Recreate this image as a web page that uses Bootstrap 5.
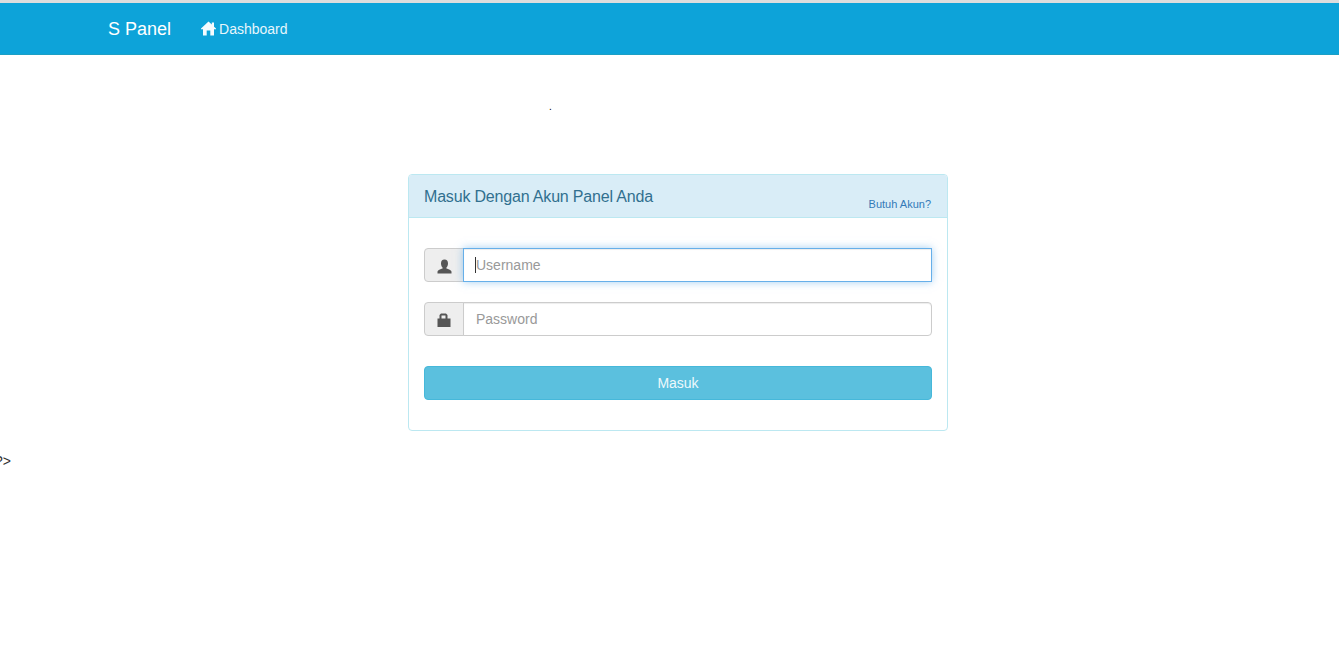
<!DOCTYPE html>
<html>
<head>
<meta name="viewport" content="width=device-width, initial-scale=1">
<link href="https://cdn.jsdelivr.net/npm/bootstrap@5.3.0/dist/css/bootstrap.min.css" rel="stylesheet">
<script src="https://cdn.jsdelivr.net/npm/bootstrap@5.3.0/dist/js/bootstrap.bundle.min.js"></script>
<style>
body {font-family: "Liberation Sans", Arial, sans-serif; font-size: 14px; color: #333; background: #fff; line-height: 20px;}

/* top bar */
.top-bar {background: #0da3d9; border-top: 3px solid #ddd; border-bottom: 1px solid #1c9fc4; height: 55px; padding: 0 0 0 108px; justify-content: flex-start;}
.top-bar .navbar-brand {color: #fff; font-size: 18px; line-height: 20px; padding: 0; margin: 0 22px 0 0;}
.top-bar .nav-link {color: #e6f6fc; font-size: 14px; line-height: 20px; padding: 0; display: flex; align-items: center; gap: 3px;}
.top-bar .nav-link svg {width: 15px; height: 15px; fill: #f4fbfe;}

/* stray output of the page */
.stray-dot {padding: 42px 0 0 549px; height: 119px; font-size: 10px; line-height: 20px; color: #000;}
.stray-end {margin: 20px 0 0 -5px; color: #333; white-space: nowrap;}

/* login panel */
.login-panel {width: 540px; margin-left: 408px; height: 257px; border: 1px solid #bce8f1; border-radius: 4px; --bs-card-bg: #fff;}
.login-panel .card-header {background: #d9edf7; border-bottom: 1px solid #bce8f1; color: #31708f; height: 43px; padding: 0 16px 0 15px; display: flex; justify-content: space-between; border-radius: 3px 3px 0 0;}
.panel-heading-text {font-size: 16px; line-height: 18px; margin-top: 13px; letter-spacing: -.18px;}
.panel-link {font-size: 11px; color: #337ab7; text-decoration: none; line-height: 14px; margin-top: 22px;}
.login-panel .card-body {padding: 30px 15px 0;}
.login-panel .input-group {height: 34px; margin-bottom: 20px;}
.login-panel .input-group-text {width: 40px; justify-content: center; padding: 0; background: #eee; border-color: #ccc; border-radius: 4px 0 0 4px;}
.login-panel .input-group-text svg {width: 15px; height: 15px; fill: #555; overflow: visible;}
.login-panel .form-control {font-size: 14px; color: #555; padding: 6px 12px; height: 34px; border-color: #ccc; border-radius: 0 4px 4px 0; box-shadow: inset 0 1px 1px rgba(0,0,0,.075);}
.login-panel .form-control::placeholder {color: #999;}
.login-panel .form-control:focus {border-color: #66afe9; box-shadow: inset 0 1px 1px rgba(0,0,0,.075), 0 0 8px rgba(102,175,233,.6); caret-color: transparent;}
/* the text cursor sitting in the focused field */
.field-caret {position: absolute; left: 52px; top: 9px; width: 1px; height: 16px; background: #333; z-index: 6;}
.masuk-btn {display: block; width: 100%; height: 34px; margin-top: 30px; padding: 0; font-size: 14px; line-height: 32px; color: #eef9fc; background: #5bc0de; border: 1px solid #46b8da; border-radius: 4px;}
</style>
</head>
<body>

<nav class="navbar navbar-expand top-bar">
  <a class="navbar-brand" href="#">S Panel</a>
  <ul class="navbar-nav">
    <li class="nav-item">
      <a class="nav-link" href="#">
        <svg viewBox="0 0 15 15"><path d="M7.5 .5 L10.8 3.6 L10.8 1.5 L13 1.5 L13 5.7 L15 7.6 L15 8.2 L13 8.2 L13 14.5 L9.3 14.5 L9.3 9.6 L5.7 9.6 L5.7 14.5 L2 14.5 L2 8.2 L0 8.2 L0 7.6 Z"/></svg>
        Dashboard
      </a>
    </li>
  </ul>
</nav>

<div class="stray-dot">.</div>

<div class="card login-panel">
  <div class="card-header">
    <div class="panel-heading-text">Masuk Dengan Akun Panel Anda</div>
    <a class="panel-link" href="#">Butuh Akun?</a>
  </div>
  <div class="card-body">
    <form>
      <div class="input-group">
        <span class="input-group-text">
          <svg viewBox="0 -1 15 15"><path d="M7.5 .5 C9.8 .5 11 2.2 11 4.4 C11 6.2 10.2 7.7 9.4 8.5 L9.4 9.6 C11.6 10.4 14.5 11.2 14.5 13 L14.5 14.5 L.5 14.5 L.5 13 C.5 11.2 3.4 10.4 5.6 9.6 L5.6 8.5 C4.8 7.7 4 6.2 4 4.4 C4 2.2 5.2 .5 7.5 .5 Z"/></svg>
        </span>
        <input type="text" class="form-control" placeholder="Username" autofocus>
        <span class="field-caret"></span>
      </div>
      <div class="input-group">
        <span class="input-group-text">
          <svg viewBox="0 0 15 15"><path fill-rule="evenodd" d="M.5 6.5 L2.5 6.5 L2.5 3 L4 1.5 L9 1.5 L10.5 3 L10.5 6.5 L13.5 6.5 L13.5 15 L.5 15 Z M4.5 6.5 L8.5 6.5 L8.5 3.5 L4.5 3.5 Z"/></svg>
        </span>
        <input type="password" class="form-control" placeholder="Password">
      </div>
      <button type="button" class="btn masuk-btn">Masuk</button>
    </form>
  </div>
</div>

<div class="stray-end">?&gt;</div>

</body>
</html>
